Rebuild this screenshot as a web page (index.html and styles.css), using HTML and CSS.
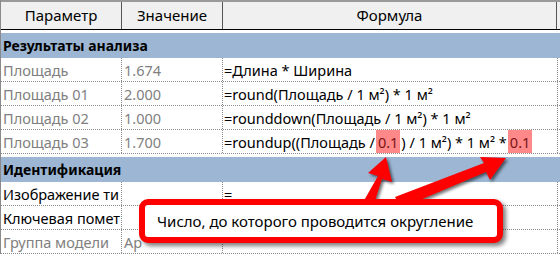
FILE: index.html
```html
<!DOCTYPE html>
<html lang="ru">
<head>
  <meta charset="UTF-8">
  <title>Параметры - формулы округления</title>
  <link rel="stylesheet" href="styles.css">
</head>
<body>

  <div class="sheet">
    <div class="head">
      <div class="hcell">Параметр</div>
      <div class="hcell">Значение</div>
      <div class="hcell">Формула</div>
    </div>

    <div class="group">Результаты анализа</div>
    <div class="row locked">
      <div class="cell">Площадь</div>
      <div class="cell">1.674</div>
      <div class="cell formula">=Длина * Ширина</div>
    </div>
    <div class="row locked">
      <div class="cell">Площадь 01</div>
      <div class="cell">2.000</div>
      <div class="cell formula">=round(Площадь / 1 м²) * 1 м²</div>
    </div>
    <div class="row locked">
      <div class="cell">Площадь 02</div>
      <div class="cell">1.000</div>
      <div class="cell formula">=rounddown(Площадь / 1 м²) * 1 м²</div>
    </div>
    <div class="row locked">
      <div class="cell">Площадь 03</div>
      <div class="cell">1.700</div>
      <div class="cell formula">=roundup((Площадь / <span class="mark">0.1</span>) / 1 м²) * 1 м² * <span class="mark">0.1</span></div>
    </div>

    <div class="group">Идентификация</div>
    <div class="row">
      <div class="cell">Изображение ти</div>
      <div class="cell"></div>
      <div class="cell formula">=</div>
    </div>
    <div class="row">
      <div class="cell">Ключевая помет</div>
      <div class="cell"></div>
      <div class="cell formula"></div>
    </div>
    <div class="row locked">
      <div class="cell">Группа модели</div>
      <div class="cell">Ар</div>
      <div class="cell formula"></div>
    </div>
  </div>

  <!-- стрелки к выделенным числам -->
  <svg class="arrows" width="560" height="256" viewBox="0 0 560 256">
    <polygon points="362,204 373,207 382,179 392,182 386,157 368,173 378,176" />
    <polygon points="395,197 401,208 486,172 490,180 506,158 480,157 484,163" />
  </svg>

  <div class="callout">Число, до которого проводится округление</div>

</body>
</html>
```

FILE: styles.css
```css
body {
  margin: 0;
  width: 560px;
  height: 256px;
  overflow: hidden;
  position: relative;
  background: #fff;
  font-family: "Noto Sans", "Open Sans", sans-serif;
  font-size: 14.5px;
  color: #000;
}

.sheet {
  width: 559px;
  border-left: 1px solid #8a8a8a;
}

.head {
  display: grid;
  grid-template-columns: 121px 101px 334px 1fr;
  height: 30px;
  box-sizing: border-box;
  border-top: 2px solid #9a9a9a;
  border-bottom: 1px solid #000;
  background: #f0f0f0;
  font-size: 15px;
}

.hcell {
  border-right: 1px solid #555;
  display: flex;
  align-items: center;
  justify-content: center;
  padding-bottom: 1px;
}

.group {
  margin-top: 3px;
  height: 25px;
  background: #9cb6d3;
  font-size: 14px;
  font-weight: bold;
  padding-left: 2px;
  display: flex;
  align-items: center;
}

.row {
  display: grid;
  grid-template-columns: 121px 101px 335px;
  height: 24px;
  box-sizing: border-box;
  border-bottom: 1px dotted #8a8a8a;
}

.cell {
  border-right: 1px dotted #8a8a8a;
  padding-left: 2px;
  white-space: nowrap;
  overflow: hidden;
  display: flex;
  align-items: center;
}

.cell.formula {
  padding-left: 1px;
  color: #000;
}

.locked .cell {
  color: #808080;
}

.locked .cell.formula {
  color: #000;
}

.mark {
  background: #f88;
  color: #7a1414;
  align-self: stretch;
  display: flex;
  align-items: center;
  padding: 0 2px;
  margin: 0 1px;
}

.arrows {
  position: absolute;
  left: 0;
  top: 0;
  pointer-events: none;
  filter: drop-shadow(2px 2px 1.5px rgba(0, 0, 0, 0.55));
}

.arrows polygon {
  fill: #f00;
}

.callout {
  position: absolute;
  left: 139px;
  top: 199px;
  width: 364px;
  height: 44px;
  box-sizing: border-box;
  border: 6px solid #f00;
  border-radius: 9px;
  background: #fff;
  box-shadow: 3px 3px 4px rgba(0, 0, 0, 0.5);
  display: flex;
  align-items: center;
  padding-left: 12px;
  font-size: 15px;
  white-space: nowrap;
}
```
